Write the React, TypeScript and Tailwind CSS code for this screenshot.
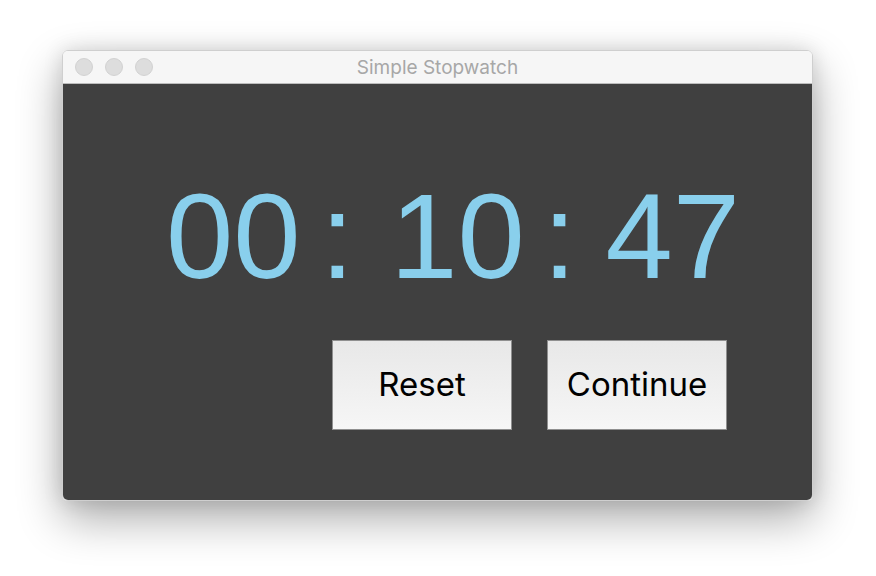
import React from "react";

export default function App() {
  const digitFont = { fontFamily: '"Liberation Sans", Arial, sans-serif' };
  return (
    <div className="w-[876px] h-[576px] bg-white pt-[50px] pl-[62px]">
      <div className="w-[751px] h-[451px] rounded-[6px] overflow-hidden flex flex-col border border-[#cfcfcf] shadow-[0_18px_45px_rgba(0,0,0,0.33),0_0_20px_rgba(0,0,0,0.12)]">
        <div className="h-[33px] shrink-0 bg-[#f6f6f6] border-b border-[#bdbdbd] relative flex items-center justify-center">
          <div className="absolute left-[12px] top-[7px] flex gap-[12px]">
            <div className="w-[18px] h-[18px] rounded-full bg-[#dddddd] border border-[#d2d2d2]" />
            <div className="w-[18px] h-[18px] rounded-full bg-[#dddddd] border border-[#d2d2d2]" />
            <div className="w-[18px] h-[18px] rounded-full bg-[#dddddd] border border-[#d2d2d2]" />
          </div>
          <span className="text-[19px] text-[#a7a7a7] font-['Inter',sans-serif] leading-none">Simple Stopwatch</span>
        </div>
        <div className="flex-1 bg-[#404040] flex flex-col">
          <div
            className="mt-[91px] pl-[103px] flex items-start text-[121px] leading-[122px] text-[#89cfec]"
            style={digitFont}
          >
            <span>00</span>
            <span className="ml-[20px]">:</span>
            <span className="ml-[36px]">10</span>
            <span className="ml-[18px]">:</span>
            <span className="ml-[29px]">47</span>
          </div>
          <div className="mt-[43px] pl-[269px] flex gap-[35px]">
            <button className="w-[180px] h-[90px] border border-[#8f8f8f] bg-gradient-to-b from-[#e8e8e8] to-[#f6f6f6] text-black text-[33px] font-['Inter',sans-serif] flex items-center justify-center">
              Reset
            </button>
            <button className="w-[180px] h-[90px] border border-[#8f8f8f] bg-gradient-to-b from-[#e8e8e8] to-[#f6f6f6] text-black text-[33px] font-['Inter',sans-serif] flex items-center justify-center">
              Continue
            </button>
          </div>
        </div>
      </div>
    </div>
  );
}
